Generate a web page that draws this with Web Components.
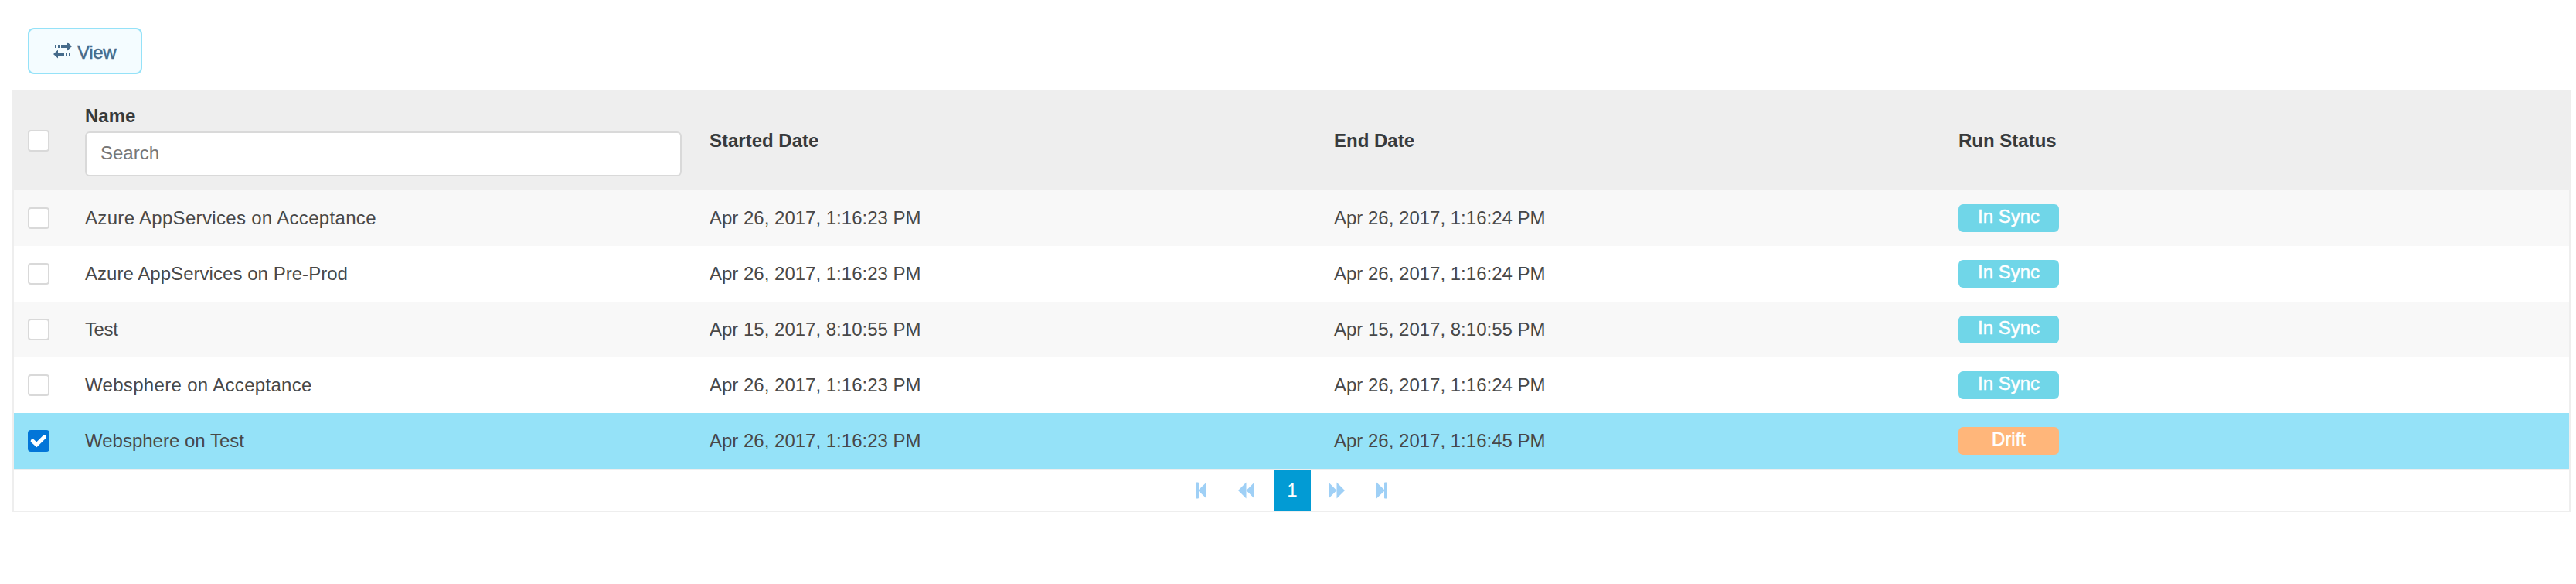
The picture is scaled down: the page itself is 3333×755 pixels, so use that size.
<!DOCTYPE html>
<html lang="en">
<head>
<meta charset="utf-8">
<title>Comparison runs</title>
<style>
body{margin:0;background:#fff;font:24px/36px "Liberation Sans",Arial,sans-serif;color:#484848}
</style>
</head>
<body>
<run-page></run-page>
<script>
const define=(name,html,setup)=>{
  const t=document.createElement('template');
  t.innerHTML=html;
  customElements.define(name,class extends HTMLElement{
    constructor(){super();this.attachShadow({mode:'open'}).append(t.content.cloneNode(true));}
    connectedCallback(){if(setup)setup(this,this.shadowRoot);}
  });
};

define('view-button',`<style>
:host{display:inline-flex}
button{box-sizing:border-box;width:148px;height:60px;margin:0;padding:3px 0 0 31px;display:flex;align-items:center;gap:7px;border:2px solid #95e2f8;border-radius:8px;background:#f4fcff;color:#456b8b;font:inherit;letter-spacing:-.3px;-webkit-text-stroke:.5px #456b8b}
svg{display:block;margin-top:-5px}
</style><button type="button"><svg width="24" height="22" viewBox="0 0 24 22" fill="currentColor"><path d="M2 4h2v4H2zM6 4h2v4H6zM10 4h8V0.500l6 5.500-6 5.500V8h-8zM22 14h-2v4h2zM18 14h-2v4h2zM14 14H6v-3.500L0 16l6 5.500V18h8z"/></svg><slot></slot></button>`);

define('check-box',`<style>
:host{display:block;box-sizing:border-box;width:28px;height:28px;border:2px solid #d9d9d9;border-radius:4px;background:#fff}
svg{display:none}
:host([checked]){border-color:#0275d8;background:#0275d8}
:host([checked]) svg{display:block}
</style><svg width="24" height="24" viewBox="0 0 24 24"><path d="M4.200 12.200 9.400 16.800 19.300 7" fill="none" stroke="#fff" stroke-width="5" stroke-linecap="round"/></svg>`);

define('status-badge',`<style>
:host{display:block;box-sizing:border-box;width:130px;height:36px;border-radius:6px;background:#70d6e8;color:#fff;text-align:center;line-height:31px;-webkit-text-stroke:.5px #fff}
:host([kind="drift"]){background:#ffb67a}
</style><slot></slot>`);

define('search-field',`<style>
:host{display:block}
input{display:block;box-sizing:border-box;width:100%;height:58px;margin:0;padding:0 18px 3px;border:2px solid #d9d9d9;border-radius:6px;background:#fff;font:inherit;outline:0}
input::placeholder{color:#777;opacity:1}
</style><input type="text" placeholder="Search">`);

define('grid-header',`<style>
:host{display:grid;grid-template-columns:74px repeat(4,1fr);align-items:center;height:130px;background:#eee;color:#373a3c;font-weight:bold}
.c{padding:0 18px}
.name{padding-bottom:2px}
.label{display:block;line-height:36px;margin-bottom:2px}
search-field{font-weight:normal}
check-box{margin-top:2px}
.t{padding-top:1px}
</style><div class="c"><check-box></check-box></div>
<div class="c name"><span class="label">Name</span><search-field></search-field></div>
<div class="c t">Started Date</div><div class="c t">End Date</div><div class="c t">Run Status</div>`);

define('grid-row',`<style>
:host{display:grid;grid-template-columns:74px repeat(4,1fr);align-items:center;height:72px;background:#fff}
:host([odd]){background:#f8f8f8}
:host([selected]){background:#95e2f8}
.c{padding:0 18px;white-space:nowrap}
</style><div class="c"><check-box></check-box></div>
<div class="c"><span class="name"></span></div><div class="c start"></div><div class="c end"></div>
<div class="c"><status-badge></status-badge></div>`,(el,r)=>{
  const name=r.querySelector('.name');
  name.textContent=el.getAttribute('name');
  name.style.letterSpacing=el.getAttribute('tracking')||'normal';
  r.querySelector('.start').textContent=el.getAttribute('start');
  r.querySelector('.end').textContent=el.getAttribute('end');
  const b=r.querySelector('status-badge'),s=el.getAttribute('status');
  b.textContent=s;
  if(s==='Drift')b.setAttribute('kind','drift');
  if(el.hasAttribute('selected'))r.querySelector('check-box').setAttribute('checked','');
});

define('page-bar',`<style>
:host{display:flex;justify-content:center;height:52px;padding-left:2px;border-top:2px solid #eee;background:#fff}
.b{display:flex;align-items:center;justify-content:center;color:#9fd0f6}
.b svg{display:block}
.first{width:46px}.prev{width:71px}.next{width:67px}.last{width:50px}
.now{width:48px;height:52px;line-height:51px;text-align:center;background:#029bd4;color:#fff}
svg{fill:currentColor}
</style>
<div class="b first"><svg width="14" height="22" viewBox="0 0 14 22"><path d="M1 .500h2q1 0 1 1V10L14 .500v21L4 12v8.500q0 1-1 1H1q-1 0-1-1v-19q0-1 1-1z"/></svg></div>
<div class="b prev"><svg width="21" height="22" viewBox="0 0 21 22"><path d="M0 11 10.500.500V11L21 .500v21L10.500 11v10.500z"/></svg></div>
<div class="now">1</div>
<div class="b next"><svg width="21" height="22" viewBox="0 0 21 22"><path d="M21 11 10.500.500V11L0 .500v21L10.500 11v10.500z"/></svg></div>
<div class="b last"><svg width="14" height="22" viewBox="0 0 14 22"><path d="M13 .500h-2q-1 0-1 1V10L0 .500v21L10 12v8.500q0 1 1 1h2q1 0 1-1v-19q0-1-1-1z"/></svg></div>`);

define('data-grid',`<style>
:host{display:block;box-sizing:border-box;border:2px solid #eee;border-top:0}
</style><grid-header></grid-header><slot></slot><page-bar></page-bar>`);

define('run-page',`<style>
:host{display:block;box-sizing:border-box;height:755px;padding:36px 7px 0 16px}
.bar{display:flex;padding-left:20px;margin-bottom:20px}
</style><div class="bar"><view-button>View</view-button></div>
<data-grid>
<grid-row odd name="Azure AppServices on Acceptance" tracking=".32px" start="Apr 26, 2017, 1:16:23 PM" end="Apr 26, 2017, 1:16:24 PM" status="In Sync"></grid-row>
<grid-row name="Azure AppServices on Pre-Prod" tracking=".04px" start="Apr 26, 2017, 1:16:23 PM" end="Apr 26, 2017, 1:16:24 PM" status="In Sync"></grid-row>
<grid-row odd name="Test" tracking="-.4px" start="Apr 15, 2017, 8:10:55 PM" end="Apr 15, 2017, 8:10:55 PM" status="In Sync"></grid-row>
<grid-row name="Websphere on Acceptance" tracking=".32px" start="Apr 26, 2017, 1:16:23 PM" end="Apr 26, 2017, 1:16:24 PM" status="In Sync"></grid-row>
<grid-row selected name="Websphere on Test" start="Apr 26, 2017, 1:16:23 PM" end="Apr 26, 2017, 1:16:45 PM" status="Drift"></grid-row>
</data-grid>`);
</script>
</body>
</html>
